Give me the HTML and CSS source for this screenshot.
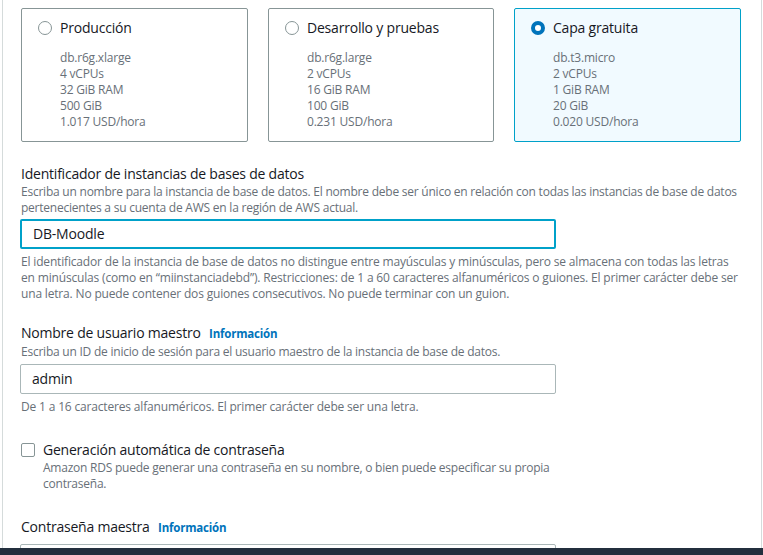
FILE: index.html
```html
<!DOCTYPE html>
<html lang="es">
<head>
<meta charset="utf-8">
<link rel="stylesheet" href="styles.css">
</head>
<body>
<div class="page">
  <div class="panel">
    <div class="cards">
      <div class="card">
        <div class="card-title"><span class="radio"></span>Producción</div>
        <div class="card-body">db.r6g.xlarge<br>4 vCPUs<br>32 GiB RAM<br>500 GiB<br>1.017 USD/hora</div>
      </div>
      <div class="card">
        <div class="card-title"><span class="radio"></span>Desarrollo y pruebas</div>
        <div class="card-body">db.r6g.large<br>2 vCPUs<br>16 GiB RAM<br>100 GiB<br>0.231 USD/hora</div>
      </div>
      <div class="card selected">
        <div class="card-title"><span class="radio checked"></span>Capa gratuita</div>
        <div class="card-body">db.t3.micro<br>2 vCPUs<br>1 GiB RAM<br>20 GiB<br>0.020 USD/hora</div>
      </div>
    </div>

    <div class="field f-ident">
      <div class="label">Identificador de instancias de bases de datos</div>
      <div class="desc">Escriba un nombre para la instancia de base de datos. El nombre debe ser único en relación con todas las instancias de base de datos pertenecientes a su cuenta de AWS en la región de AWS actual.</div>
      <div class="input focused">DB-Moodle</div>
      <div class="hint">El identificador de la instancia de base de datos no distingue entre mayúsculas y minúsculas, pero se almacena con todas las letras en minúsculas (como en “miinstanciadebd”). Restricciones: de 1 a 60 caracteres alfanuméricos o guiones. El primer carácter debe ser una letra. No puede contener dos guiones consecutivos. No puede terminar con un guion.</div>
    </div>

    <div class="field f-user">
      <div class="label">Nombre de usuario maestro <a class="info">Información</a></div>
      <div class="desc">Escriba un ID de inicio de sesión para el usuario maestro de la instancia de base de datos.</div>
      <div class="input">admin</div>
      <div class="hint">De 1 a 16 caracteres alfanuméricos. El primer carácter debe ser una letra.</div>
    </div>

    <div class="check-row">
      <span class="checkbox"></span>
      <div class="check-text">
        <div class="label">Generación automática de contraseña</div>
        <div class="desc">Amazon RDS puede generar una contraseña en su nombre, o bien puede especificar su propia contraseña.</div>
      </div>
    </div>

    <div class="field f-pass">
      <div class="label">Contraseña maestra <a class="info">Información</a></div>
      <div class="input"></div>
    </div>
  </div>
  <div class="footer"></div>
</div>
</body>
</html>
```

FILE: styles.css
```css
* { box-sizing: border-box; }
html, body { margin: 0; padding: 0; background: #ffffff; }
body {
  font-family: "Open Sans", "Noto Sans", sans-serif;
  color: #16191f;
  width: 763px;
  height: 555px;
  overflow: hidden;
}
.page {
  height: 555px;
  display: flex;
  flex-direction: column;
  padding-left: 2px;
}
.panel {
  flex: 1;
  overflow: hidden;
  border-left: 1px solid #d5dbdb;
  border-right: 1px solid #d5dbdb;
  width: 760px;
  padding: 8px 20px 0 18px;
}
.footer {
  height: 7px;
  background: #232f3e;
  margin-left: -2px;
}
.cards {
  display: grid;
  grid-template-columns: 227px 226px 227px;
  column-gap: 20px;
}
.card {
  border: 1px solid #879596;
  border-radius: 2px;
  height: 134px;
  padding: 9px 16px 0 16px;
}
.card.selected {
  border-color: #00a1c9;
  background: #f1faff;
}
.card-title {
  display: flex;
  align-items: center;
  height: 20px;
  font-size: 14px;
  line-height: 20px;
  letter-spacing: -0.2px;
}
.radio {
  width: 14px;
  height: 14px;
  border-radius: 50%;
  border: 1px solid #879596;
  margin-right: 8px;
  flex: none;
  background: #fff;
}
.radio.checked {
  border: 4px solid #0073bb;
}
.card-body {
  padding-left: 22px;
  margin-top: 12px;
  font-size: 12px;
  line-height: 16px;
  color: #687078;
  letter-spacing: -0.2px;
}
.label {
  font-size: 14px;
  line-height: 20px;
  color: #16191f;
  letter-spacing: -0.22px;
}
.info {
  color: #0073bb;
  font-size: 11.5px;
  font-weight: 700;
  margin-left: 5px;
  letter-spacing: -0.2px;
}
.desc, .hint {
  font-size: 12px;
  line-height: 16px;
  color: #687078;
  letter-spacing: -0.23px;
}
.hint { letter-spacing: -0.17px; }
.input {
  width: 536px;
  height: 30px;
  border: 1px solid #aab7b8;
  border-radius: 2px;
  font-size: 14px;
  line-height: 28px;
  padding-left: 11px;
  margin-left: -1px;
  letter-spacing: -0.2px;
}
.input.focused {
  border: 2px solid #00a1c9;
  line-height: 26px;
}
.f-ident { margin-top: 22px; }
.f-ident .input { margin-top: 3px; }
.f-ident .hint { margin-top: 5px; }
.f-user { margin-top: 21px; }
.f-user .input { margin-top: 4px; }
.f-user .hint { margin-top: 5px; }
.check-row {
  display: flex;
  margin-top: 25px;
}
.checkbox {
  width: 14px;
  height: 14px;
  border: 1px solid #879596;
  border-radius: 2px;
  margin-top: 3px;
  margin-right: 8px;
  flex: none;
}
.check-text .desc { width: 512px; }
.f-pass { margin-top: 25px; }
.f-pass .input { margin-top: 6px; }
```
